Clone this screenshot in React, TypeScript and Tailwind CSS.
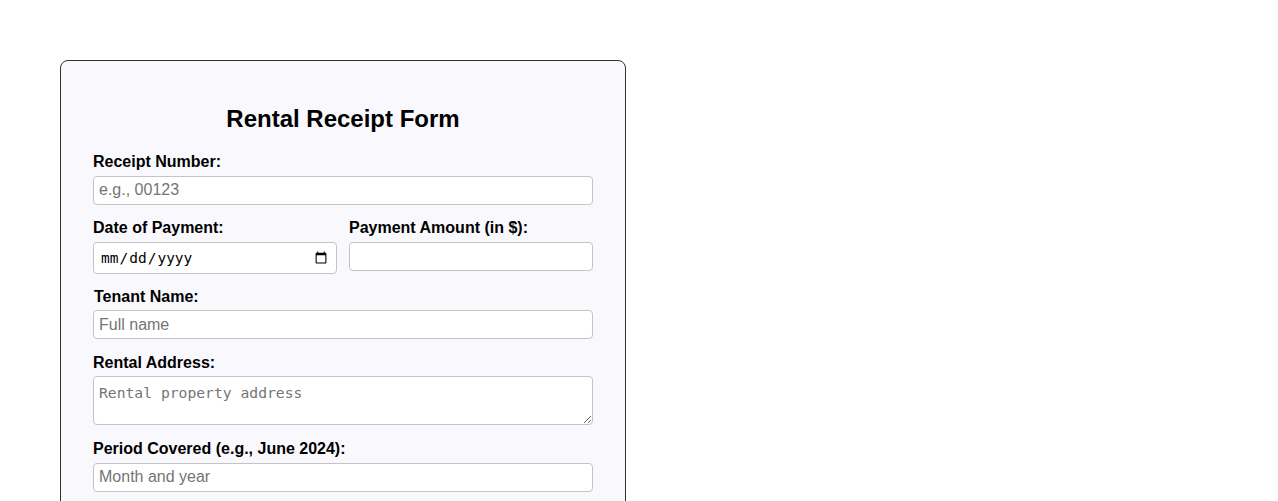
import { useState } from 'react';

const labelCls = 'block text-[16px] leading-[18px] font-bold text-black mb-[4.5px]';
const inputCls =
  'block w-full h-[29px] px-[5px] bg-white border border-[#c4c4c4] rounded-[4px] text-[16px] leading-[17px] text-black placeholder:text-[#757575] outline-none';

export default function App() {
  const [form, setForm] = useState({
    receipt: '',
    date: '',
    amount: '',
    tenant: '',
    address: '',
    period: '',
  });

  const update = (key: keyof typeof form) => (e: React.ChangeEvent<HTMLInputElement | HTMLTextAreaElement>) =>
    setForm({ ...form, [key]: e.target.value });

  return (
    <div className="min-h-screen bg-white pt-[60px] pl-[60px] font-['Liberation_Sans',Arial,sans-serif]">
      <form className="w-[566px] bg-[#f9f9fd] border border-[#333333] rounded-[8px] px-[32px] pt-[44px] pb-[32px]">
        <h2 className="text-[24px] leading-[27px] font-bold text-center text-black mb-[21px]">
          Rental Receipt Form
        </h2>

        {/* receipt number */}
        <div className="mb-[14px]">
          <label className={labelCls}>Receipt Number:</label>
          <input className={inputCls} placeholder="e.g., 00123" value={form.receipt} onChange={update('receipt')} />
        </div>

        {/* date + amount */}
        <div className="grid grid-cols-2 gap-[12px] mb-[14px] items-start">
          <div>
            <label className={labelCls + ' !mb-[5px]'}>Date of Payment:</label>
            <input
              type="date"
              className="block w-full h-[32px] pl-[6px] pr-[6px] pt-[2px] bg-white border border-[#c4c4c4] rounded-[4px] text-[14.5px] text-black font-['DejaVu_Sans_Mono',monospace] outline-none"
              value={form.date}
              onChange={update('date')}
            />
          </div>
          <div>
            <label className={labelCls + ' !mb-[5px]'}>Payment Amount (in $):</label>
            <input type="number" className={inputCls} value={form.amount} onChange={update('amount')} />
          </div>
        </div>

        {/* tenant */}
        <div className="mb-[14.5px]">
          <label className={labelCls + ' ml-px'}>Tenant Name:</label>
          <input className={inputCls} placeholder="Full name" value={form.tenant} onChange={update('tenant')} />
        </div>

        {/* address */}
        <div className="mb-[15px]">
          <label className={labelCls}>Rental Address:</label>
          <textarea
            className="block w-full h-[49px] px-[5px] pt-[7px] bg-white border border-[#c4c4c4] rounded-[4px] text-[14.7px] leading-[17px] text-black placeholder:text-[#757575] font-['DejaVu_Sans_Mono',monospace] outline-none"
            placeholder="Rental property address"
            value={form.address}
            onChange={update('address')}
          />
        </div>

        {/* period */}
        <div className="mb-[14.5px]">
          <label className={labelCls}>Period Covered (e.g., June 2024):</label>
          <input className={inputCls} placeholder="Month and year" value={form.period} onChange={update('period')} />
        </div>
      </form>
    </div>
  );
}
